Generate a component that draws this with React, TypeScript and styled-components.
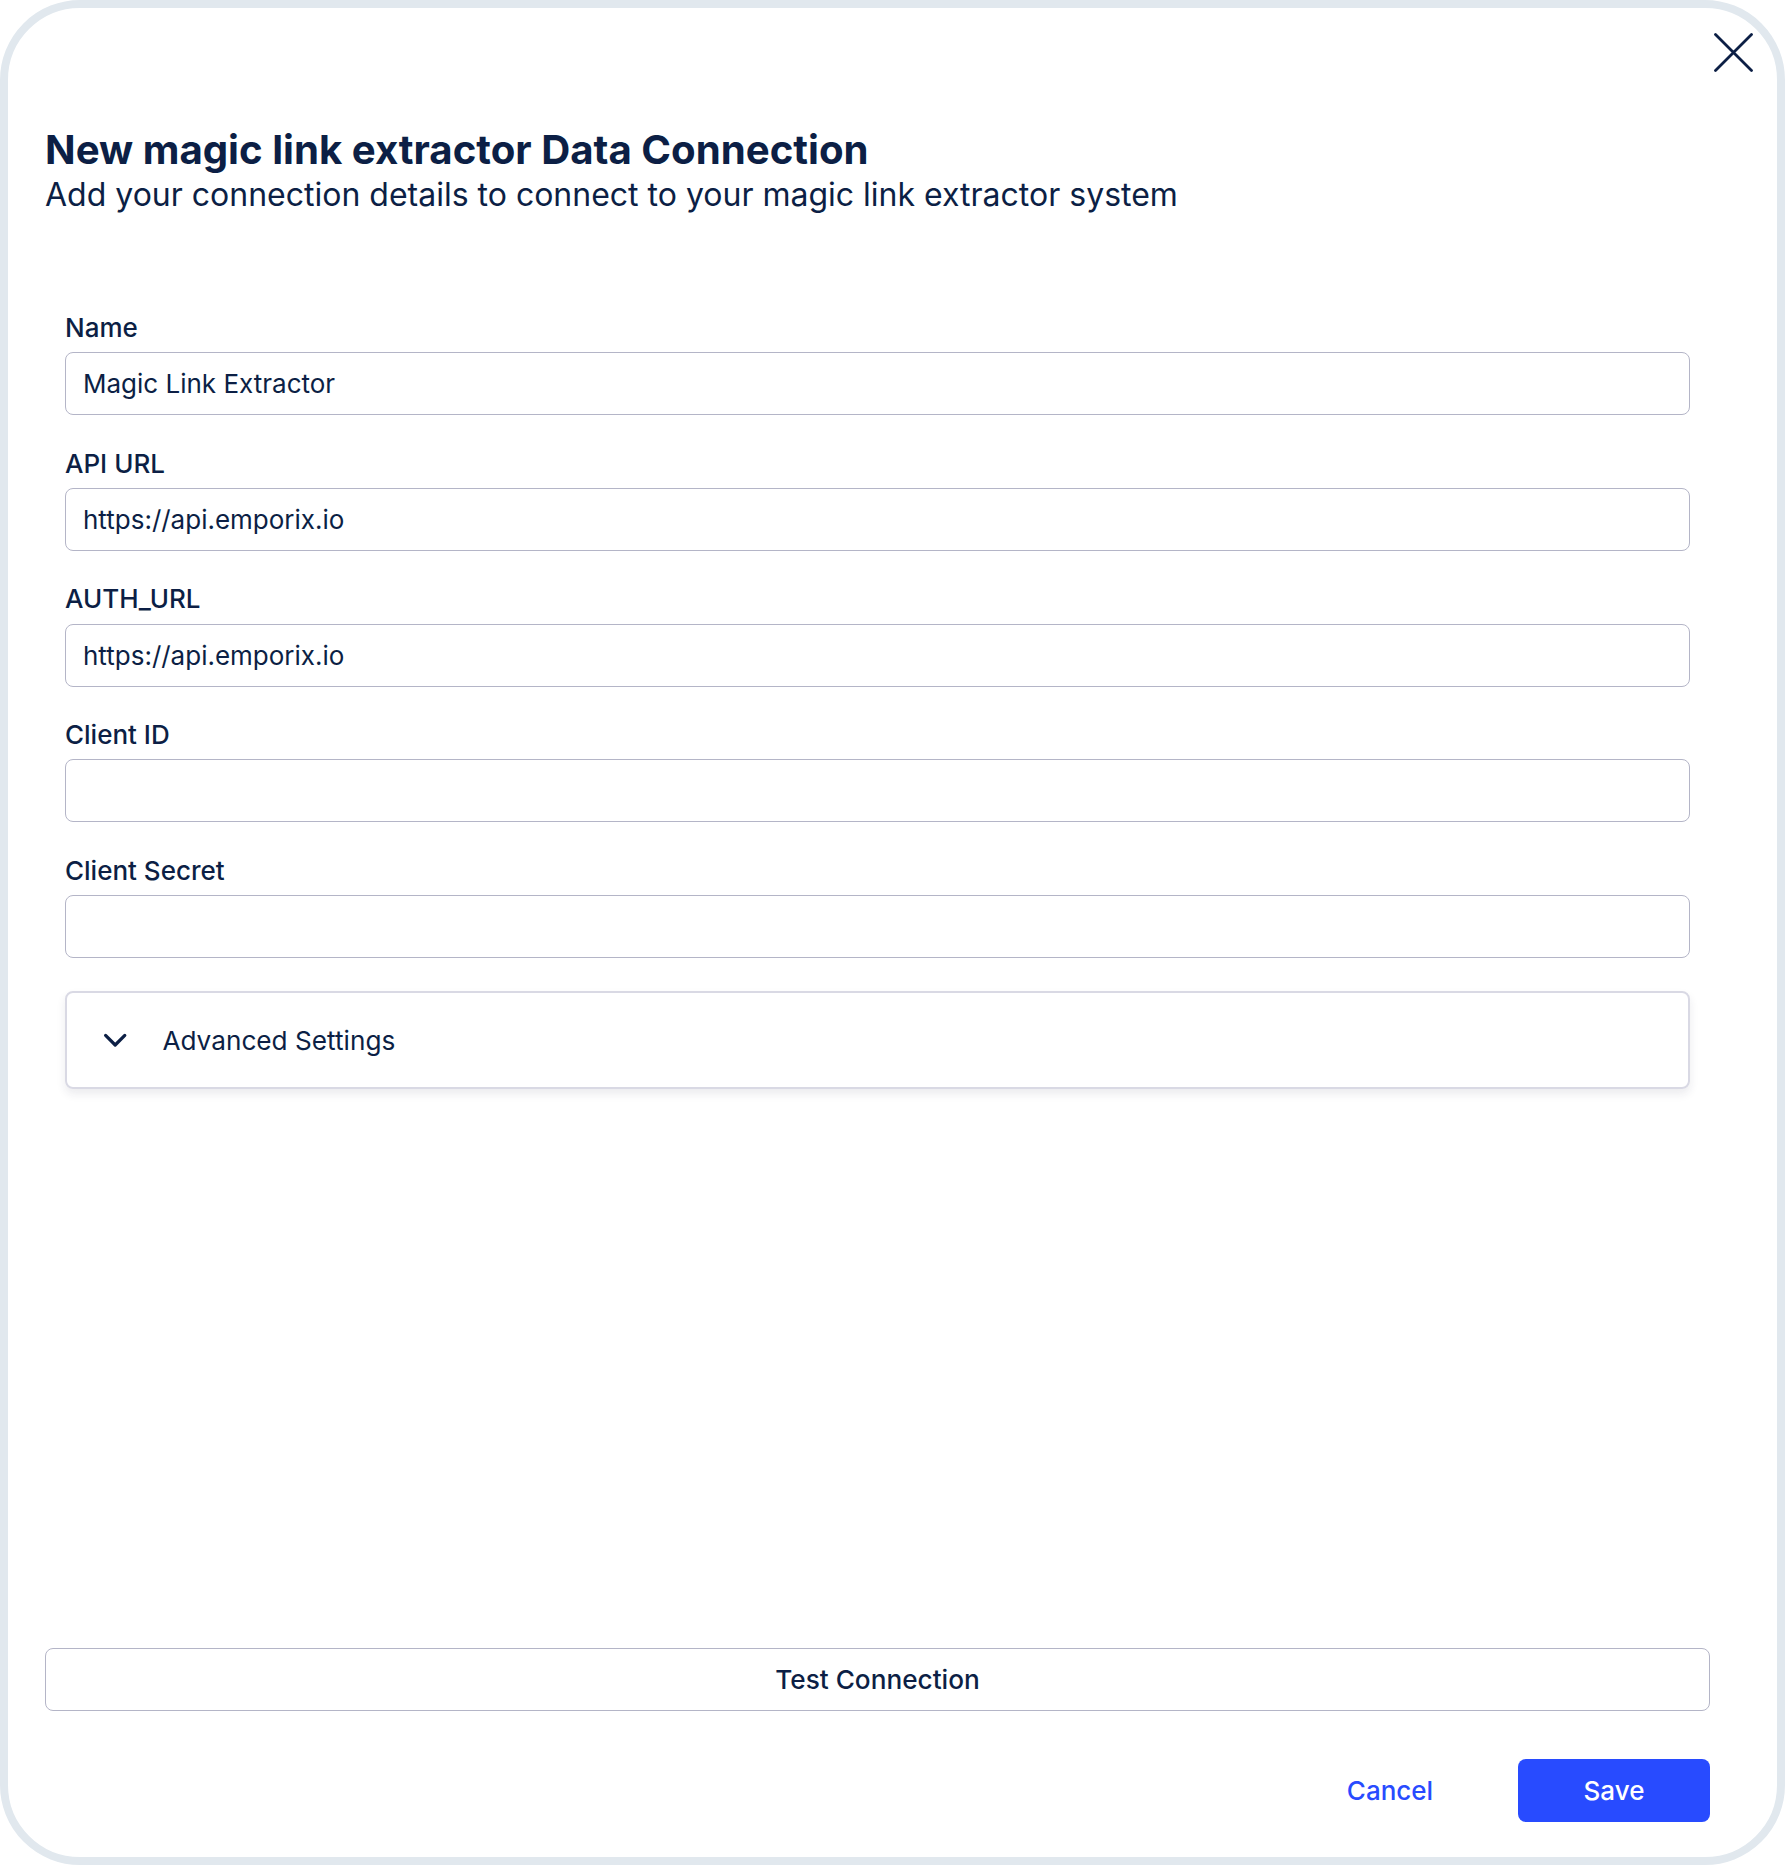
import React from "react";
import styled, { createGlobalStyle } from "styled-components";

const GlobalStyle = createGlobalStyle`
  html, body {
    margin: 0;
    padding: 0;
    background: #ffffff;
  }
  * {
    box-sizing: border-box;
  }
  body {
    font-family: Inter, "Noto Sans", "Liberation Sans", sans-serif;
    color: #0c1f45;
  }
`;

const Frame = styled.div`
  width: 100%;
  height: 100vh;
  min-height: 1865px;
  border: 8px solid #e1e8ee;
  border-radius: 80px;
  background: #ffffff;
  display: flex;
  flex-direction: column;
  overflow: hidden;
`;

const CloseRow = styled.div`
  display: flex;
  justify-content: flex-end;
  padding: 25px 24px 0 0;
`;

const CloseButton = styled.button`
  width: 39px;
  height: 39px;
  padding: 0;
  border: none;
  background: transparent;
  cursor: pointer;
  display: flex;
  color: #0c1f45;
`;

const Content = styled.div`
  flex: 1;
  display: flex;
  flex-direction: column;
  padding: 0 67px 35px 37px;
`;

const Header = styled.header`
  margin-top: 53.5px;
  display: flex;
  flex-direction: column;
  gap: 2.4px;
`;

const Title = styled.h1`
  margin: 0;
  font-size: 40.2px;
  line-height: 48px;
  font-weight: 700;
  color: #0c1f45;
`;

const Subtitle = styled.p`
  margin: 0;
  font-size: 32px;
  line-height: 38.4px;
  font-weight: 400;
  color: #0c1f45;
`;

const Form = styled.div`
  margin-top: 93.8px;
  padding: 0 20px;
  display: flex;
  flex-direction: column;
  gap: 28.2px;
`;

const Field = styled.label`
  display: flex;
  flex-direction: column;
`;

const Label = styled.span`
  font-size: 26px;
  line-height: 38.4px;
  font-weight: 500;
  color: #0c1f45;
  padding-top: 1.2px;
  margin-bottom: 4.8px;
`;

const Input = styled.input`
  height: 63px;
  width: 100%;
  border: 1.6px solid #b4b5c7;
  border-radius: 8px;
  padding: 0 17px;
  font-family: Inter, "Noto Sans", sans-serif;
  font-size: 26px;
  color: #0c1f45;
  background: #ffffff;
  outline: none;
`;

const Accordion = styled.div`
  margin-top: 5.2px;
  height: 98px;
  border: 2px solid #d9d9e4;
  border-radius: 8px;
  box-shadow: 0 5px 10px rgba(30, 30, 70, 0.09);
  display: flex;
  align-items: center;
  padding-left: 29px;
  gap: 28px;
  cursor: pointer;
`;

const AccordionLabel = styled.span`
  font-size: 26.2px;
  font-weight: 400;
  color: #0c1f45;
`;

const Spacer = styled.div`
  flex: 1;
`;

const OutlineButton = styled.button`
  width: 100%;
  height: 63px;
  border: 1.6px solid #b4b5c7;
  border-radius: 8px;
  background: #ffffff;
  font-family: Inter, "Noto Sans", sans-serif;
  font-size: 26.2px;
  font-weight: 500;
  color: #0c1f45;
  cursor: pointer;
`;

const Footer = styled.div`
  margin-top: 48px;
  display: flex;
  justify-content: flex-end;
  gap: 32px;
`;

const ActionButton = styled.button<{ $primary?: boolean }>`
  width: 192px;
  height: 63px;
  border: none;
  border-radius: 8px;
  background: ${(p) => (p.$primary ? "#284bff" : "transparent")};
  color: ${(p) => (p.$primary ? "#ffffff" : "#284bff")};
  font-family: Inter, "Noto Sans", sans-serif;
  font-size: 26px;
  font-weight: 500;
  cursor: pointer;
`;

const fields = [
  { label: "Name", value: "Magic Link Extractor" },
  { label: "API URL", value: "https://api.emporix.io" },
  { label: "AUTH_URL", value: "https://api.emporix.io" },
  { label: "Client ID", value: "" },
  { label: "Client Secret", value: "" },
];

export default function App() {
  return (
    <>
      <GlobalStyle />
      <Frame>
        <CloseRow>
          <CloseButton aria-label="Close">
            <svg width="39" height="39" viewBox="0 0 39 39" fill="none">
              <path
                d="M1.5 1.5 L37.5 37.5 M37.5 1.5 L1.5 37.5"
                stroke="currentColor"
                strokeWidth="2.8"
                strokeLinecap="round"
              />
            </svg>
          </CloseButton>
        </CloseRow>
        <Content>
          <Header>
            <Title>New magic link extractor Data Connection</Title>
            <Subtitle>
              Add your connection details to connect to your magic link extractor system
            </Subtitle>
          </Header>
          <Form>
            {fields.map((f) => (
              <Field key={f.label}>
                <Label>{f.label}</Label>
                <Input defaultValue={f.value} />
              </Field>
            ))}
            <Accordion>
              <svg width="38.4" height="38.4" viewBox="0 0 24 24" fill="none">
                <path
                  d="m6 9 6 6 6-6"
                  stroke="#0c1f45"
                  strokeWidth="2"
                  strokeLinecap="round"
                  strokeLinejoin="round"
                />
              </svg>
              <AccordionLabel>Advanced Settings</AccordionLabel>
            </Accordion>
          </Form>
          <Spacer />
          <OutlineButton>Test Connection</OutlineButton>
          <Footer>
            <ActionButton>Cancel</ActionButton>
            <ActionButton $primary>Save</ActionButton>
          </Footer>
        </Content>
      </Frame>
    </>
  );
}
